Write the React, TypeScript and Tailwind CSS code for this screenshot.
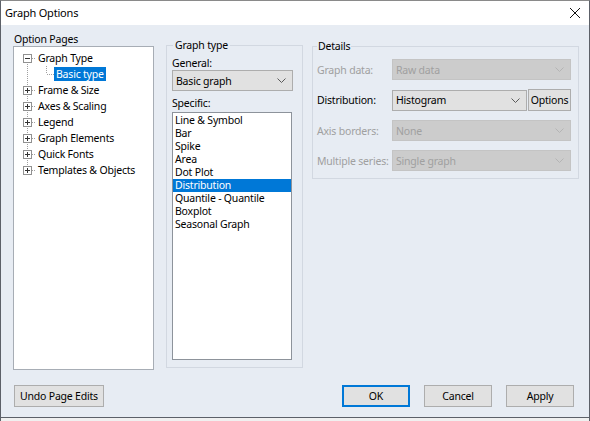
import React from 'react';

const treeItems = [
  { label: 'Graph Type', open: true },
  { label: 'Frame & Size' },
  { label: 'Axes & Scaling' },
  { label: 'Legend' },
  { label: 'Graph Elements' },
  { label: 'Quick Fonts' },
  { label: 'Templates & Objects' },
];

const specific = [
  'Line & Symbol',
  'Bar',
  'Spike',
  'Area',
  'Dot Plot',
  'Distribution',
  'Quantile - Quantile',
  'Boxplot',
  'Seasonal Graph',
];

function Chevron({ disabled }: { disabled?: boolean }) {
  return (
    <svg width="9" height="5" viewBox="0 0 9 5" className="shrink-0">
      <path
        d="M0.5 0.5 L4.5 4.5 L8.5 0.5"
        fill="none"
        stroke={disabled ? '#b4b4b4' : '#5a5a5a'}
        strokeWidth="1"
      />
    </svg>
  );
}

function Combo({
  value,
  disabled,
  className = '',
}: {
  value: string;
  disabled?: boolean;
  className?: string;
}) {
  return (
    <div
      className={`flex h-[21px] shrink-0 items-center justify-between border pl-[3px] pr-[6px] ${
        disabled
          ? 'border-[#c4c4c4] bg-[#cccccc] text-[#a0a0a0]'
          : 'border-[#adadad] bg-[#e1e1e1] text-black'
      } ${className}`}
    >
      <span>{value}</span>
      <Chevron disabled={disabled} />
    </div>
  );
}

// expander box + dotted connectors for one tree row
function TreeGutter({ first, last, open }: { first?: boolean; last?: boolean; open?: boolean }) {
  return (
    <svg width="22" height="16" viewBox="0 0 22 16" shapeRendering="crispEdges" className="shrink-0">
      <g stroke="#a0a0a0" strokeDasharray="1 1">
        {!first && <line x1="13.5" y1="0" x2="13.5" y2="4" />}
        {!last && <line x1="13.5" y1="12" x2="13.5" y2="16" />}
        <line x1="18" y1="8.5" x2="22" y2="8.5" />
      </g>
      <rect x="9.5" y="4.5" width="8" height="8" fill="#fff" stroke="#919191" />
      <line x1="11" y1="8.5" x2="16" y2="8.5" stroke="#333" />
      {!open && <line x1="13.5" y1="6" x2="13.5" y2="11" stroke="#333" />}
    </svg>
  );
}

function ChildGutter() {
  return (
    <svg width="40" height="16" viewBox="0 0 40 16" shapeRendering="crispEdges" className="shrink-0">
      <g stroke="#a0a0a0" strokeDasharray="1 1">
        <line x1="13.5" y1="0" x2="13.5" y2="16" />
        <line x1="32.5" y1="0" x2="32.5" y2="8" />
        <line x1="33" y1="8.5" x2="40" y2="8.5" />
      </g>
    </svg>
  );
}

function Button({ children, primary, className = '' }: { children: React.ReactNode; primary?: boolean; className?: string }) {
  return (
    <button
      type="button"
      className={`flex h-[22px] shrink-0 items-center justify-center whitespace-nowrap bg-[#e1e1e1] text-black ${
        primary ? 'border-2 border-[#0078d7]' : 'border border-[#adadad]'
      } ${className}`}
    >
      {children}
    </button>
  );
}

export default function App() {
  return (
    <div className="flex h-[421px] w-[590px] flex-col border-x border-t border-x-[#5c6068] border-t-[#8a8a8a] bg-[#f0f0f0] font-['Noto_Sans',sans-serif] text-[10.5px] leading-[14px] tracking-[-0.2px] text-black">
      {/* title bar */}
      <div className="flex h-[24px] shrink-0 items-center justify-between bg-white pl-[4px] pr-[9px]">
        <span className="text-[11px]">Graph Options</span>
        <svg width="10" height="10" viewBox="0 0 10 10">
          <path d="M0 0 L10 10 M10 0 L0 10" stroke="#111" strokeWidth="1" />
        </svg>
      </div>

      {/* body */}
      <div className="flex h-[393px] shrink-0 flex-col border-b border-[#5c6068] bg-[#e7ecf3] pl-[12px] pt-[7px]">
        <div className="flex items-start">
          {/* option pages */}
          <div className="flex w-[141px] shrink-0 flex-col">
            <div className="h-[14px] pl-[1px]">Option Pages</div>
            <div className="h-[324px] border border-[#a7adb5] bg-white pt-[3px]">
              {treeItems.map((it, i) => (
                <React.Fragment key={it.label}>
                  <div className="flex h-[16px] items-center">
                    <TreeGutter first={i === 0} last={i === treeItems.length - 1} open={it.open} />
                    <span className="px-[2px]">{it.label}</span>
                  </div>
                  {it.open && (
                    <div className="flex h-[16px] items-center">
                      <ChildGutter />
                      <span className="bg-[#0078d7] px-[2px] text-white">Basic type</span>
                    </div>
                  )}
                </React.Fragment>
              ))}
            </div>
          </div>

          {/* graph type group */}
          <fieldset className="ml-[12px] mt-[6px] h-[330px] w-[137px] shrink-0 border border-[#d2d8e1] px-[5px]">
            <legend className="ml-[1px] px-[2px]">Graph type</legend>
            <div className="mt-[4px]">General:</div>
            <Combo value="Basic graph" className="w-[121px]" />
            <div className="mt-[5px]">Specific:</div>
            <div className="mt-[2px] h-[248px] w-[120px] border border-[#8d939b] bg-white pt-[1px]">
              {specific.map((s) => (
                <div
                  key={s}
                  className={`h-[13px] pl-[2px] leading-[13px] ${
                    s === 'Distribution' ? 'bg-[#0078d7] text-white' : ''
                  }`}
                >
                  {s}
                </div>
              ))}
            </div>
          </fieldset>

          {/* details group */}
          <fieldset className="ml-[9px] mt-[7px] w-[267px] shrink-0 border border-[#d2d8e1] pb-[7px] pl-[4px] pr-[7px]">
            <legend className="px-[1px]">Details</legend>
            <div className="mt-[6px] flex flex-col gap-[9px] whitespace-nowrap">
              <div className="flex items-center">
                <span className="w-[75px] shrink-0 text-[#a0a0a0]">Graph data:</span>
                <Combo value="Raw data" disabled className="w-[179px]" />
              </div>
              <div className="flex items-center">
                <span className="w-[75px] shrink-0">Distribution:</span>
                <Combo value="Histogram" className="w-[135px]" />
                <Button className="ml-[1px] w-[43px]">Options</Button>
              </div>
              <div className="flex items-center">
                <span className="w-[75px] shrink-0 text-[#a0a0a0]">Axis borders:</span>
                <Combo value="None" disabled className="w-[179px]" />
              </div>
              <div className="flex items-center">
                <span className="w-[75px] shrink-0 text-[#a0a0a0]">Multiple series:</span>
                <Combo value="Single graph" disabled className="w-[179px]" />
              </div>
            </div>
          </fieldset>
        </div>

        {/* bottom buttons */}
        <div className="mt-[15px] flex items-center pr-[15px]">
          <Button className="ml-[1px] w-[90px]">Undo Page Edits</Button>
          <div className="ml-auto flex gap-[14px]">
            <Button primary className="w-[68px]">OK</Button>
            <Button className="w-[68px]">Cancel</Button>
            <Button className="w-[68px]">Apply</Button>
          </div>
        </div>
      </div>
    </div>
  );
}
